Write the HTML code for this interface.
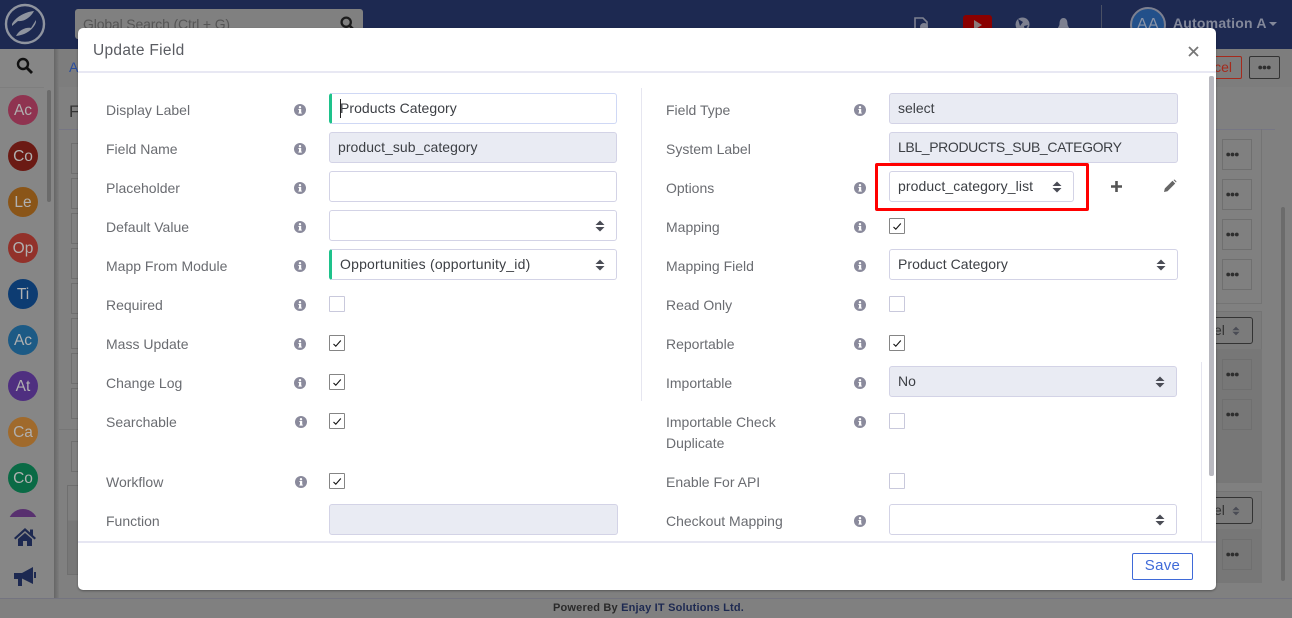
<!DOCTYPE html>
<html><head><meta charset="utf-8"><style>
html,body{margin:0;padding:0;width:1292px;height:618px;overflow:hidden;background:#808080;font-family:"Liberation Sans",sans-serif}
.a{position:absolute;box-sizing:border-box}
.t{position:absolute;white-space:nowrap;line-height:20px;font-size:14px}
.l{position:absolute;white-space:nowrap;line-height:21px;font-size:14px;color:#6a6c71}
.f{position:absolute;box-sizing:border-box;height:31px;border:1px solid #d3d3e6;border-radius:3px;background:#fff;font-size:14px;color:#3c3f44;line-height:28px;padding-left:8px;white-space:nowrap}
.d{background:#e9ebf3}
.g{border-left:3px solid #1ec28b;padding-left:8px}
.c{position:absolute;box-sizing:border-box;width:16px;height:16px;border:1px solid #c9c9dc;background:#fff;border-radius:1px}
.k{border-color:#858585}
.av{position:absolute;left:8px;width:30px;height:30px;border-radius:50%;text-align:center;line-height:31px;font-size:15.5px;color:#b0b0b0}
.bx{position:absolute;box-sizing:border-box;border:1px solid #6f6f6f;width:30px;height:31px;left:1222px}
.lb{position:absolute;left:71px;width:9px;height:31px;box-sizing:border-box;border:1px solid #6f6f6f;border-right:none}
</style></head><body>
<svg width="0" height="0" style="position:absolute"><defs>
<symbol id="i" viewBox="0 0 12 12"><circle cx="6" cy="6" r="6" fill="#8a8a9c"/><rect x="5" y="5" width="2.2" height="4.4" fill="#fff"/><rect x="4.4" y="8.6" width="3.4" height="1" fill="#fff"/><rect x="4.4" y="5" width="2" height="1" fill="#fff"/><circle cx="6" cy="3.2" r="1.2" fill="#fff"/></symbol>
<symbol id="s" viewBox="0 0 10 12"><path d="M5 0.5L9.5 5H0.5ZM5 11.5L0.5 7H9.5Z" fill="#4a4c55"/></symbol>
<symbol id="ck" viewBox="0 0 16 16"><path d="M4.500 9L6.800 11.200L11.800 5.500" fill="none" stroke="#111" stroke-width="1.100"/></symbol>
<symbol id="dt" viewBox="0 0 13 5"><circle cx="2.200" cy="2.500" r="1.900" fill="#2e2e2e"/><circle cx="6.500" cy="2.500" r="1.900" fill="#2e2e2e"/><circle cx="10.800" cy="2.500" r="1.900" fill="#2e2e2e"/></symbol>
</defs></svg>

<!-- top bar -->
<div class="a" style="left:0;top:0;width:1292px;height:49px;background:#1d2951"></div>
<svg class="a" style="left:4px;top:3px" width="42" height="42" viewBox="0 0 42 42"><circle cx="21" cy="21" r="19" fill="#1d2951" stroke="#8f949f" stroke-width="2.400"/><path d="M8 21C11 15 20 9 30 8C27 14 20 19 14 18L8 23Z" fill="#8f949f"/><path d="M32 19C30 26 22 32 12 33C15 27 22 24 27 25L32 17Z" fill="#8f949f"/></svg>
<div class="a" style="left:75px;top:9px;width:288px;height:30px;background:#808080;border-radius:3px"></div>
<div class="t" style="left:83px;top:14px;color:#555;font-size:14px;letter-spacing:-.15px">Global Search (Ctrl + G)</div>
<svg class="a" style="left:340px;top:16px" width="15" height="15" viewBox="0 0 15 15"><circle cx="6.200" cy="6.200" r="4.600" fill="none" stroke="#1c1c1c" stroke-width="2.300"/><path d="M9.800 9.800L14 14" stroke="#1c1c1c" stroke-width="2.600"/></svg>
<svg class="a" style="left:913px;top:17px" width="18" height="14" viewBox="0 0 18 14"><path d="M2 1H10L14 5V14H2Z" fill="none" stroke="#7d8090" stroke-width="1.600"/><circle cx="11" cy="10" r="4" fill="#7d8090"/></svg>
<div class="a" style="left:963px;top:15px;width:29px;height:20px;background:#8a0000;border-radius:3px"></div>
<svg class="a" style="left:972px;top:19px" width="12" height="12" viewBox="0 0 12 12"><path d="M2 1L10 6L2 11Z" fill="#8c7a7a"/></svg>
<svg class="a" style="left:1015px;top:17px" width="15" height="15" viewBox="0 0 15 15"><circle cx="7.500" cy="7.500" r="7" fill="#7d8090"/><path d="M3 2L8 5L5 9ZM9 9L13 8L10 14Z" fill="#1d2951"/></svg>
<svg class="a" style="left:1056px;top:17px" width="15" height="15" viewBox="0 0 15 15"><path d="M7.500 1C10.500 1 11.500 4 11.500 7C11.500 9 13 10 13.500 12H1.500C2 10 3.500 9 3.500 7C3.500 4 4.500 1 7.500 1Z" fill="#7d8090"/></svg>
<div class="a" style="left:1101px;top:5px;width:1px;height:39px;background:#4a5064"></div>
<div class="a" style="left:1130px;top:7px;width:36px;height:36px;border-radius:50%;background:#22508a;border:2px solid #7d8090;color:#8a94a8;font-size:16px;letter-spacing:.5px;text-align:center;line-height:31px">AA</div>
<div class="t" style="left:1173px;top:13px;color:#83889a;font-weight:bold;font-size:14px;letter-spacing:.2px">Automation A</div>
<div class="a" style="left:1269px;top:22px;border:4px solid transparent;border-top:4px solid #83889a"></div>

<!-- sidebar -->
<div class="a" style="left:0;top:49px;width:54px;height:549px;background:#868686"></div>
<div class="a" style="left:54px;top:49px;width:5px;height:549px;background:linear-gradient(90deg,#666,#7c7c7c)"></div>
<div class="a" style="left:59px;top:49px;width:1233px;height:38px;background:#7d7d7d"></div>
<div class="a" style="left:0;top:87px;width:44px;height:1px;background:#7e7e7e"></div>
<svg class="a" style="left:16px;top:57px" width="17" height="17" viewBox="0 0 17 17"><circle cx="7" cy="7" r="5" fill="none" stroke="#111" stroke-width="2.400"/><path d="M11 11L16 16" stroke="#111" stroke-width="2.800"/></svg>
<div class="a" style="left:47px;top:90px;width:4px;height:112px;background:#6b6b6b;border-radius:2px"></div>
<div class="av" style="top:95px;background:#8f3350">Ac</div>
<div class="av" style="top:141px;background:#6b1a14">Co</div>
<div class="av" style="top:187px;background:#8a5518">Le</div>
<div class="av" style="top:233px;background:#92312a">Op</div>
<div class="av" style="top:279px;background:#0d3c72">Ti</div>
<div class="av" style="top:325px;background:#1c5a85">Ac</div>
<div class="av" style="top:371px;background:#4f2f80">At</div>
<div class="av" style="top:417px;background:#a06a2c">Ca</div>
<div class="av" style="top:463px;background:#0a6a45">Co</div>
<div class="a" style="left:8px;top:509px;width:30px;height:8px;overflow:hidden"><div class="a" style="left:0;top:0;width:30px;height:30px;border-radius:50%;background:#58306f"></div></div>
<svg class="a" style="left:13px;top:527px" width="24" height="20" viewBox="0 0 24 20"><path d="M12 1L23 11L21.500 12.500L12 4L2.500 12.500L1 11L5 7.300L5 7.300L17 2H19V6.500Z" fill="none"/><path d="M12 1L17 5.500V2.500H20V8.200L23 11L21.500 12.500L12 4L2.500 12.500L1 11Z" fill="#1d2951"/><path d="M5 12L12 6L19 12V19H14V14H10V19H5Z" fill="#1d2951"/></svg>
<svg class="a" style="left:13px;top:566px" width="23" height="21" viewBox="0 0 23 21"><path d="M1 7H9L20 1V18L9 12.500V20H5V13H1Z" fill="#1d2951"/><rect x="21" y="6" width="2" height="6" fill="#1d2951"/></svg>

<!-- background page -->
<div class="t" style="left:69px;top:57px;color:#2a4d9e;font-size:14px">A</div>
<div class="t" style="left:69px;top:102px;color:#333;font-size:17px">F</div>
<div class="a" style="left:59px;top:129px;width:1216px;height:1px;background:#767684"></div>
<div class="lb" style="top:143px"></div><div class="lb" style="top:178px"></div><div class="lb" style="top:213px"></div><div class="lb" style="top:248px"></div><div class="lb" style="top:283px"></div><div class="lb" style="top:318px"></div><div class="lb" style="top:353px"></div><div class="lb" style="top:388px"></div><div class="lb" style="top:441px"></div>
<div class="a" style="left:67px;top:485px;width:13px;height:90px;background:linear-gradient(#7f7f7f 39%,#777 39%);border:1px solid #6f6f6f"></div>
<div class="a" style="left:59px;top:429px;width:21px;height:1px;background:#767676"></div>
<div class="a" style="left:1200px;top:129px;width:62px;height:175px;border-right:1px solid #747474;border-bottom:1px solid #747474"></div>
<div class="a" style="left:1200px;top:311px;width:62px;height:172px;border:1px solid #747474;background:#7b7b7b"></div>
<div class="a" style="left:1200px;top:491px;width:62px;height:92px;border:1px solid #747474;background:#7b7b7b"></div>
<div class="a" style="left:1200px;top:349px;width:62px;height:134px;background:#777"></div>
<div class="a" style="left:1200px;top:529px;width:62px;height:54px;background:#777"></div>
<div class="a" style="left:1200px;top:56px;width:42px;height:23px;border:1px solid #a52a1c;border-radius:2px;color:#a52a1c;font-size:14px;line-height:21px;text-align:right;padding-right:9px;overflow:hidden">cel</div>
<div class="a" style="left:1249px;top:56px;width:31px;height:23px;border:1px solid #333;border-radius:2px"></div>
<svg class="a" style="left:1258px;top:65px" width="13" height="5"><use href="#dt"/></svg>
<div class="bx" style="top:139px"></div><div class="bx" style="top:179px"></div><div class="bx" style="top:219px"></div><div class="bx" style="top:259px"></div>
<div class="bx" style="top:359px"></div><div class="bx" style="top:399px"></div><div class="bx" style="top:539px"></div>
<svg class="a" style="left:1226px;top:152px" width="13" height="5"><use href="#dt"/></svg>
<svg class="a" style="left:1226px;top:192px" width="13" height="5"><use href="#dt"/></svg>
<svg class="a" style="left:1226px;top:232px" width="13" height="5"><use href="#dt"/></svg>
<svg class="a" style="left:1226px;top:272px" width="13" height="5"><use href="#dt"/></svg>
<svg class="a" style="left:1226px;top:372px" width="13" height="5"><use href="#dt"/></svg>
<svg class="a" style="left:1226px;top:412px" width="13" height="5"><use href="#dt"/></svg>
<svg class="a" style="left:1226px;top:552px" width="13" height="5"><use href="#dt"/></svg>
<div class="a" style="left:1200px;top:317px;width:53px;height:27px;border:1px solid #333;border-radius:3px;color:#333;font-size:14px;line-height:24px;padding-left:13px">el</div>
<svg class="a" style="left:1232px;top:326px" width="8" height="10"><use href="#s"/></svg>
<div class="a" style="left:1200px;top:497px;width:53px;height:27px;border:1px solid #333;border-radius:3px;color:#333;font-size:14px;line-height:24px;padding-left:13px">el</div>
<svg class="a" style="left:1232px;top:506px" width="8" height="10"><use href="#s"/></svg>
<div class="a" style="left:1281px;top:207px;width:4px;height:374px;background:#6b6b6b;border-radius:2px"></div>
<div class="a" style="left:0;top:598px;width:1292px;height:1px;background:#747480"></div>
<div class="t" style="left:553px;top:598px;font-size:11px;font-weight:bold;color:#2a2a2a;letter-spacing:.19px">Powered By <span style="color:#1d2951">Enjay IT Solutions Ltd.</span></div>

<!-- modal -->
<div class="a" style="left:78px;top:28px;width:1138px;height:562px;background:#fff;border-radius:5px;box-shadow:0 1px 2px rgba(0,0,0,.35)"></div>
<div class="a" style="left:78px;top:71px;width:1138px;height:2px;background:#e8e8f3"></div>
<div class="t" style="left:93px;top:41px;font-size:15.5px;color:#5a5c62;letter-spacing:.3px">Update Field</div>
<svg class="a" style="left:1188px;top:46px" width="11" height="11" viewBox="0 0 11 11"><path d="M1 1L10 10M10 1L1 10" stroke="#777" stroke-width="1.800"/></svg>
<div class="a" style="left:1209px;top:76px;width:5px;height:400px;background:#b9b9c0;border-radius:2px"></div>
<div class="a" style="left:641px;top:88px;width:1px;height:313px;background:#e6e6f0"></div>
<div class="a" style="left:1201px;top:362px;width:1px;height:180px;background:#e6e6f0"></div>
<div class="a" style="left:78px;top:541px;width:1138px;height:2px;background:#e6e6f2"></div>
<div class="a" style="left:1132px;top:553px;width:61px;height:27px;border:1px solid #3f6ad8;border-radius:2px;color:#3f6ad8;font-size:15px;letter-spacing:.3px;text-align:center;line-height:24px">Save</div>

<!-- left labels -->
<div class="l" style="left:106px;top:100px">Display Label</div>
<div class="l" style="left:106px;top:139px">Field Name</div>
<div class="l" style="left:106px;top:178px">Placeholder</div>
<div class="l" style="left:106px;top:217px">Default Value</div>
<div class="l" style="left:106px;top:256px">Mapp From Module</div>
<div class="l" style="left:106px;top:295px">Required</div>
<div class="l" style="left:106px;top:334px">Mass Update</div>
<div class="l" style="left:106px;top:373px">Change Log</div>
<div class="l" style="left:106px;top:412px">Searchable</div>
<div class="l" style="left:106px;top:472px">Workflow</div>
<div class="l" style="left:106px;top:511px">Function</div>

<svg class="a" style="left:294px;top:104px" width="12" height="12"><use href="#i"/></svg>
<svg class="a" style="left:294px;top:143px" width="12" height="12"><use href="#i"/></svg>
<svg class="a" style="left:294px;top:182px" width="12" height="12"><use href="#i"/></svg>
<svg class="a" style="left:294px;top:221px" width="12" height="12"><use href="#i"/></svg>
<svg class="a" style="left:294px;top:260px" width="12" height="12"><use href="#i"/></svg>
<svg class="a" style="left:294px;top:299px" width="12" height="12"><use href="#i"/></svg>
<svg class="a" style="left:294px;top:338px" width="12" height="12"><use href="#i"/></svg>
<svg class="a" style="left:294px;top:377px" width="12" height="12"><use href="#i"/></svg>
<svg class="a" style="left:295px;top:416px" width="12" height="12"><use href="#i"/></svg>
<svg class="a" style="left:295px;top:476px" width="12" height="12"><use href="#i"/></svg>

<!-- left fields -->
<div class="f g" style="left:329px;top:93px;width:288px;border-color:#cfd8f5;border-left-color:#1ec28b;letter-spacing:.05px">Products Category</div>
<div class="a" style="left:340px;top:99px;width:1px;height:19px;background:#222"></div>
<div class="f d" style="left:329px;top:132px;width:288px;letter-spacing:.05px">product_sub_category</div>
<div class="f" style="left:329px;top:171px;width:288px"></div>
<div class="f" style="left:329px;top:210px;width:288px"></div>
<svg class="a" style="left:595px;top:220px" width="10" height="12"><use href="#s"/></svg>
<div class="f g" style="left:329px;top:249px;width:288px;letter-spacing:.2px">Opportunities (opportunity_id)</div>
<svg class="a" style="left:595px;top:259px" width="10" height="12"><use href="#s"/></svg>
<div class="c" style="left:329px;top:296px"></div>
<div class="c k" style="left:329px;top:335px"><svg style="position:absolute;left:-1px;top:-1px" width="16" height="16"><use href="#ck"/></svg></div>
<div class="c k" style="left:329px;top:374px"><svg style="position:absolute;left:-1px;top:-1px" width="16" height="16"><use href="#ck"/></svg></div>
<div class="c k" style="left:329px;top:413px"><svg style="position:absolute;left:-1px;top:-1px" width="16" height="16"><use href="#ck"/></svg></div>
<div class="c k" style="left:329px;top:473px"><svg style="position:absolute;left:-1px;top:-1px" width="16" height="16"><use href="#ck"/></svg></div>
<div class="f d" style="left:329px;top:504px;width:289px"></div>

<!-- right labels -->
<div class="l" style="left:666px;top:100px">Field Type</div>
<div class="l" style="left:666px;top:139px">System Label</div>
<div class="l" style="left:666px;top:178px">Options</div>
<div class="l" style="left:666px;top:217px">Mapping</div>
<div class="l" style="left:666px;top:256px">Mapping Field</div>
<div class="l" style="left:666px;top:295px">Read Only</div>
<div class="l" style="left:666px;top:334px">Reportable</div>
<div class="l" style="left:666px;top:373px">Importable</div>
<div class="l" style="left:666px;top:412px">Importable Check</div>
<div class="l" style="left:666px;top:433px">Duplicate</div>
<div class="l" style="left:666px;top:472px">Enable For API</div>
<div class="l" style="left:666px;top:511px">Checkout Mapping</div>

<svg class="a" style="left:854px;top:104px" width="12" height="12"><use href="#i"/></svg>
<svg class="a" style="left:854px;top:182px" width="12" height="12"><use href="#i"/></svg>
<svg class="a" style="left:854px;top:221px" width="12" height="12"><use href="#i"/></svg>
<svg class="a" style="left:854px;top:260px" width="12" height="12"><use href="#i"/></svg>
<svg class="a" style="left:854px;top:299px" width="12" height="12"><use href="#i"/></svg>
<svg class="a" style="left:854px;top:338px" width="12" height="12"><use href="#i"/></svg>
<svg class="a" style="left:854px;top:377px" width="12" height="12"><use href="#i"/></svg>
<svg class="a" style="left:854px;top:416px" width="12" height="12"><use href="#i"/></svg>
<svg class="a" style="left:854px;top:515px" width="12" height="12"><use href="#i"/></svg>

<!-- right fields -->
<div class="f d" style="left:889px;top:93px;width:289px">select</div>
<div class="f d" style="left:889px;top:132px;width:289px;letter-spacing:-.37px">LBL_PRODUCTS_SUB_CATEGORY</div>
<div class="f" style="left:889px;top:171px;width:185px;letter-spacing:.1px">product_category_list</div>
<svg class="a" style="left:1052px;top:181px" width="10" height="12"><use href="#s"/></svg>
<div class="a" style="left:875px;top:163px;width:214px;height:48px;border:3px solid #f00;border-radius:2px"></div>
<svg class="a" style="left:1110px;top:180px" width="13" height="13" viewBox="0 0 13 13"><path d="M6.500 1V12M1 6.500H12" stroke="#555" stroke-width="2.600"/></svg>
<svg class="a" style="left:1163px;top:179px" width="14" height="14" viewBox="0 0 14 14"><path d="M1 13L1.800 9.500L9.500 1.800L12.200 4.500L4.500 12.200Z" fill="#666"/><path d="M10.500 1L11.500 0.500L13.500 2.500L13 3.500Z" fill="#666"/></svg>
<div class="c k" style="left:889px;top:218px"><svg style="position:absolute;left:-1px;top:-1px" width="16" height="16"><use href="#ck"/></svg></div>
<div class="f" style="left:889px;top:249px;width:289px;letter-spacing:.06px">Product Category</div>
<svg class="a" style="left:1156px;top:259px" width="10" height="12"><use href="#s"/></svg>
<div class="c" style="left:889px;top:296px"></div>
<div class="c k" style="left:889px;top:335px"><svg style="position:absolute;left:-1px;top:-1px" width="16" height="16"><use href="#ck"/></svg></div>
<div class="f d" style="left:889px;top:366px;width:288px">No</div>
<svg class="a" style="left:1155px;top:376px" width="10" height="12"><use href="#s"/></svg>
<div class="c" style="left:889px;top:413px"></div>
<div class="c" style="left:889px;top:473px"></div>
<div class="f" style="left:889px;top:504px;width:288px"></div>
<svg class="a" style="left:1155px;top:514px" width="10" height="12"><use href="#s"/></svg>
</body></html>
